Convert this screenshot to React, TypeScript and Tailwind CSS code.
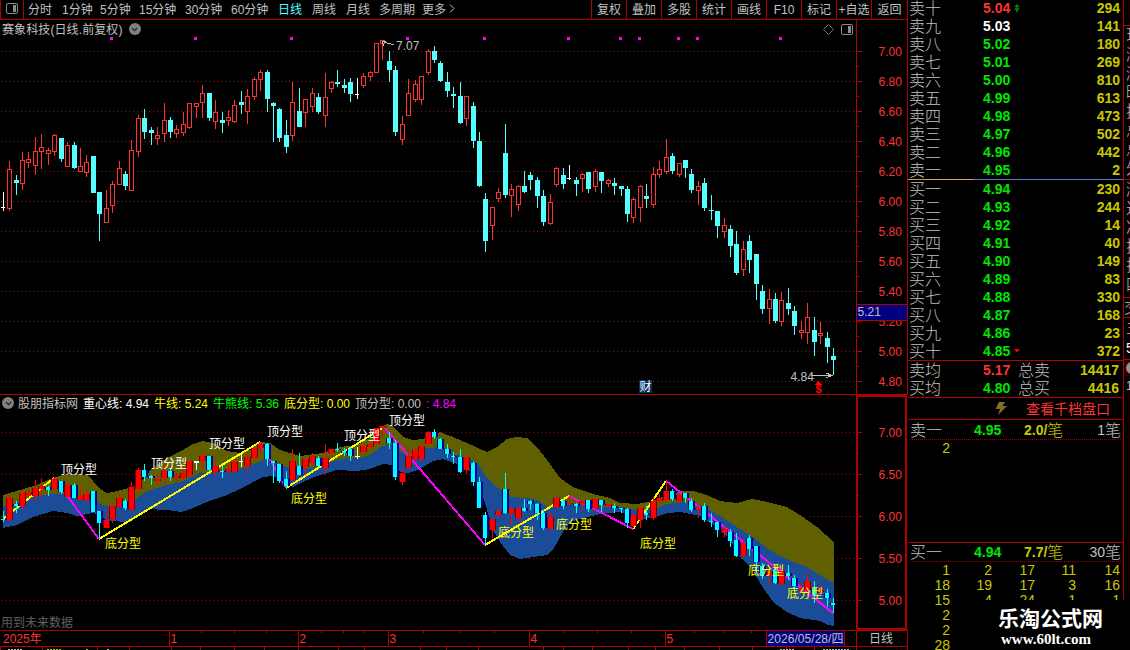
import { ChevronDown } from "lucide-react";

type Candle = [number, number, number, number, number, string];

// x, high, body top, body bottom, low, kind (r = up, c = down, w = flat)
const CANDLES: Candle[] = [
  [3, 192, 207, 208, 211, "w"], [9, 161, 169, 209, 211, "r"], [16, 175, 180, 183, 195, "c"],
  [22, 152, 160, 184, 190, "r"], [28, 152, 159, 163, 168, "r"], [35, 137, 151, 166, 175, "r"],
  [41, 134, 147, 152, 169, "r"], [48, 148, 150, 154, 165, "r"], [54, 134, 135, 152, 156, "r"],
  [61, 138, 138, 159, 162, "c"], [67, 142, 145, 167, 167, "r"], [74, 142, 145, 168, 169, "c"],
  [80, 148, 166, 172, 172, "r"], [86, 155, 162, 173, 177, "r"], [93, 156, 156, 193, 193, "c"],
  [99, 192, 192, 214, 241, "c"], [106, 190, 208, 223, 223, "r"], [112, 181, 184, 206, 213, "r"],
  [119, 161, 168, 185, 185, "r"], [125, 171, 174, 186, 190, "c"], [131, 140, 150, 191, 191, "r"],
  [138, 115, 118, 152, 157, "r"], [144, 109, 118, 132, 139, "c"], [151, 127, 130, 133, 145, "c"],
  [157, 127, 135, 139, 145, "r"], [164, 103, 120, 134, 142, "r"], [170, 117, 120, 132, 138, "c"],
  [176, 125, 129, 134, 138, "r"], [183, 112, 124, 133, 136, "r"], [189, 103, 103, 128, 129, "r"],
  [196, 103, 103, 107, 118, "r"], [202, 85, 93, 103, 118, "r"], [209, 93, 93, 118, 121, "c"],
  [215, 100, 112, 122, 129, "r"], [222, 112, 120, 123, 133, "c"], [228, 110, 117, 121, 126, "r"],
  [234, 100, 105, 122, 123, "r"], [241, 91, 102, 105, 114, "c"], [247, 89, 96, 112, 124, "r"],
  [254, 77, 79, 97, 100, "r"], [260, 70, 72, 80, 91, "r"], [267, 70, 72, 99, 112, "c"],
  [273, 102, 103, 106, 142, "c"], [279, 108, 109, 138, 142, "c"], [286, 120, 135, 147, 153, "c"],
  [292, 82, 102, 136, 141, "r"], [299, 88, 111, 127, 127, "c"], [305, 99, 99, 113, 127, "r"],
  [312, 88, 93, 107, 112, "r"], [318, 93, 97, 112, 114, "c"], [325, 73, 97, 116, 127, "r"],
  [331, 81, 82, 89, 93, "r"], [337, 70, 82, 84, 87, "c"], [344, 79, 85, 88, 93, "c"],
  [350, 78, 82, 94, 102, "c"], [357, 78, 94, 95, 99, "w"], [363, 73, 76, 86, 88, "r"],
  [370, 71, 72, 77, 81, "r"], [376, 43, 43, 73, 73, "r"], [382, 40, 40, 44, 60, "r"],
  [389, 51, 61, 70, 82, "c"], [395, 66, 70, 132, 136, "c"], [402, 116, 124, 140, 145, "r"],
  [408, 79, 93, 116, 116, "r"], [415, 80, 84, 100, 102, "r"], [421, 76, 76, 100, 105, "r"],
  [428, 49, 51, 73, 75, "r"], [434, 46, 51, 60, 63, "c"], [440, 61, 63, 81, 82, "c"],
  [447, 72, 82, 91, 97, "c"], [453, 87, 94, 96, 108, "c"], [460, 82, 96, 123, 124, "c"],
  [466, 96, 96, 119, 126, "r"], [473, 102, 106, 141, 148, "c"], [479, 132, 141, 186, 187, "c"],
  [485, 193, 199, 241, 252, "c"], [492, 207, 207, 226, 240, "r"], [498, 188, 192, 199, 202, "r"],
  [505, 124, 153, 195, 198, "c"], [511, 184, 189, 196, 217, "r"], [518, 185, 186, 205, 211, "r"],
  [524, 171, 186, 192, 193, "c"], [530, 172, 175, 180, 190, "c"], [537, 177, 180, 196, 208, "c"],
  [543, 190, 196, 222, 226, "c"], [550, 194, 202, 224, 225, "r"], [556, 167, 168, 185, 187, "r"],
  [563, 168, 175, 184, 189, "c"], [569, 165, 178, 179, 180, "w"], [576, 177, 180, 184, 196, "c"],
  [582, 173, 174, 179, 192, "r"], [588, 172, 172, 189, 193, "c"], [595, 169, 171, 187, 192, "r"],
  [601, 172, 172, 181, 193, "c"], [608, 179, 180, 184, 187, "r"], [614, 178, 183, 186, 195, "c"],
  [621, 186, 186, 189, 196, "c"], [627, 186, 189, 214, 222, "c"], [633, 197, 199, 218, 223, "r"],
  [640, 185, 186, 208, 222, "r"], [646, 184, 196, 199, 208, "c"], [653, 167, 174, 205, 208, "r"],
  [659, 161, 169, 175, 178, "r"], [666, 139, 157, 172, 174, "r"], [672, 153, 156, 171, 174, "c"],
  [679, 163, 163, 175, 177, "r"], [685, 160, 160, 168, 178, "c"], [691, 169, 174, 190, 193, "c"],
  [698, 181, 186, 191, 205, "r"], [704, 178, 183, 208, 211, "c"], [711, 195, 210, 211, 220, "c"],
  [717, 211, 211, 226, 238, "c"], [724, 218, 225, 232, 238, "r"], [730, 225, 229, 246, 257, "c"],
  [736, 231, 244, 273, 275, "c"], [743, 241, 249, 270, 276, "r"], [749, 235, 241, 260, 273, "c"],
  [756, 254, 254, 284, 300, "c"], [762, 285, 291, 309, 314, "c"], [769, 289, 299, 309, 324, "r"],
  [775, 293, 299, 321, 323, "c"], [781, 292, 300, 322, 326, "r"], [788, 288, 303, 309, 315, "c"],
  [794, 306, 311, 326, 335, "c"], [801, 321, 330, 333, 339, "r"], [807, 303, 317, 333, 344, "r"],
  [814, 317, 330, 342, 356, "c"], [820, 322, 333, 336, 344, "r"], [827, 332, 338, 347, 363, "c"],
  [833, 348, 356, 360, 375, "c"],
];

const BAND_TOP = "3,495 20,490 37,485 50,479 63,475 75,474 87,475 93,481 100,489 107,493 117,491 133,487 147,477 150,470 167,458 183,450 193,444 202,441 213,443 227,451 240,453 250,450 260,442 270,443 280,450 290,453 300,456 323,453 340,447 357,445 370,438 380,428 387,424 393,426 403,437 413,440 423,439 430,436 440,432 453,437 467,443 487,452 497,447 507,439 517,437 527,438 537,447 547,460 560,478 573,487 593,494 610,498 620,503 637,504 653,501 667,495 683,491 693,491 707,495 720,501 737,503 752,499 767,502 787,507 803,517 817,527 834,542";
const BAND_MID = "834,583 823,577 807,567 793,562 777,554 767,548 753,537 737,527 723,518 707,508 693,503 683,502 667,504 657,508 640,511 623,507 610,507 593,506 577,504 563,505 547,507 537,500 527,498 510,497 497,487 487,478 480,467 473,460 463,457 450,452 440,447 427,448 417,457 407,455 397,450 390,444 380,447 370,455 360,458 347,458 333,461 323,466 310,468 293,469 280,465 270,459 263,460 247,467 233,471 213,472 200,473 183,481 167,485 147,491 137,498 127,505 110,507 103,505 93,500 80,498 63,494 50,494 33,497 17,503 3,506";
const BAND_LOW = "3,528 17,525 33,517 53,511 67,513 77,516 93,513 100,515 107,521 130,522 137,515 147,509 167,510 182,512 193,508 207,502 227,495 240,489 263,477 273,476 283,480 293,487 303,482 317,476 337,470 357,471 370,469 383,464 393,465 400,472 408,473 420,469 433,461 443,459 460,465 472,473 480,487 487,510 493,530 500,542 510,555 520,559 533,557 547,555 553,550 563,532 570,522 580,519 600,514 620,512 640,519 653,518 667,513 680,512 700,516 717,527 730,540 740,557 753,570 760,583 773,602 787,612 800,618 820,621 828,625 834,626";

const reverse = (pts: string) => pts.split(" ").reverse().join(" ");

const PERIODS = [
  { label: "分时", w: "w-[34px]" },
  { label: "1分钟", w: "w-[38px]" },
  { label: "5分钟", w: "w-[39px]" },
  { label: "15分钟", w: "w-[46px]" },
  { label: "30分钟", w: "w-[46px]" },
  { label: "60分钟", w: "w-[47px]" },
  { label: "日线", w: "w-[34px]", active: true },
  { label: "周线", w: "w-[34px]" },
  { label: "月线", w: "w-[33px]" },
  { label: "多周期", w: "w-[43px]" },
  { label: "更多", w: "w-[27px]" },
];

const TOOLS = ["复权", "叠加", "多股", "统计", "画线", "F10", "标记", "+自选"];

const INDICATORS = [
  { text: "股朋指标网", cls: "w-[65px] text-[#c0c0c0]" },
  { text: "重心线: 4.94", cls: "w-[71px] text-white" },
  { text: "牛线: 5.24", cls: "w-[59px] text-[#ffff00]" },
  { text: "牛熊线: 5.36", cls: "w-[71px] text-[#00ff00]" },
  { text: "底分型: 0.00", cls: "w-[71px] text-[#ffff00]" },
  { text: "顶分型: 0.00", cls: "w-[71px] text-[#c0c0c0]" },
  { text: ": 4.84", cls: "text-[#ff00ff]" },
];

const SELLS = [
  ["卖十", "5.04", "294"], ["卖九", "5.03", "141"], ["卖八", "5.02", "180"], ["卖七", "5.01", "269"],
  ["卖六", "5.00", "810"], ["卖五", "4.99", "613"], ["卖四", "4.98", "473"], ["卖三", "4.97", "502"],
  ["卖二", "4.96", "442"], ["卖一", "4.95", "2"],
];

const BUYS = [
  ["买一", "4.94", "230"], ["买二", "4.93", "244"], ["买三", "4.92", "14"], ["买四", "4.91", "40"],
  ["买五", "4.90", "149"], ["买六", "4.89", "83"], ["买七", "4.88", "330"], ["买八", "4.87", "168"],
  ["买九", "4.86", "23"], ["买十", "4.85", "372"],
];

const ORDERS = [
  ["1", "2", "17", "11", "14"],
  ["18", "19", "17", "3", "16"],
  ["15", "4", "24", "1", "1"],
  ["2"],
  ["2"],
  ["28"],
];

const TOPS = [[61, 469], [151, 463], [209, 443], [267, 431], [344, 435], [389, 420]];
const BOTTOMS = [[105, 543], [291, 498], [498, 532], [556, 524], [640, 543], [748, 570], [787, 593]];
const EVENTS = [110, 194, 290, 406, 483, 567, 619, 638, 677, 696, 779];

function PanelIcon({ className }: { className?: string }) {
  return (
    <svg className={className} width="12" height="11" viewBox="0 0 12 11">
      <rect x="0.5" y="0.5" width="11" height="10" rx="1.5" fill="none" stroke="#8c8c8c" />
      <rect x="7" y="2" width="3" height="7" fill="#8c8c8c" />
    </svg>
  );
}

function RoundArrow() {
  return (
    <span className="flex h-3 w-3 items-center justify-center rounded-full bg-[#808080] text-[#181818]">
      <ChevronDown size={9} strokeWidth={3} />
    </span>
  );
}

function Toolbar() {
  return (
    <div className="flex h-5 border-b border-[#b00000] text-xs leading-5 text-[#c0c0c0]">
      <div className="flex w-6 items-start justify-center border-x border-[#b00000] pt-[3px]">
        <PanelIcon />
      </div>
      <div className="flex pl-1">
        {PERIODS.map((p) => (
          <span key={p.label} className={`${p.w} whitespace-nowrap ${p.active ? "text-[#54ffff]" : ""}`}>
            {p.label}
          </span>
        ))}
        <svg width="8" height="18" viewBox="0 0 8 18" fill="none" stroke="#c0c0c0">
          <path d="M1 4.500L5 8.500L1 12.500" />
        </svg>
      </div>
      <div className="ml-auto flex">
        {TOOLS.map((t) => (
          <span key={t} className="w-[35px] whitespace-nowrap border-l border-[#b00000] text-center">
            {t}
          </span>
        ))}
        <span className="w-[37px] border-x border-[#b00000] text-center">返回</span>
      </div>
    </div>
  );
}

function PriceCandle({ c }: { c: Candle }) {
  const [x, high, top, bottom, low, kind] = c;
  if (kind === "w") {
    return (
      <g fill="#fff">
        <rect x={x} y={high} width="1" height={low - high} />
        <rect x={x - 2} y={top} width="4" height="1" />
      </g>
    );
  }
  if (kind === "c") {
    return (
      <g fill="#54ffff">
        <rect x={x} y={high} width="1" height={low - high} />
        <rect x={x - 2} y={top} width="5" height={bottom - top} />
      </g>
    );
  }
  return (
    <g fill="#ff3232">
      <rect x={x} y={high} width="1" height={top - high} />
      <rect x={x} y={bottom} width="1" height={low - bottom} />
      <rect x={x - 1.5} y={top + 0.5} width="4" height={bottom - top - 1} fill="none" stroke="#ff3232" />
    </g>
  );
}

// the lower pane shares the price data on a flatter scale
const sub = (y: number) => Math.round(432 + (y - 51) * 0.56);

function SubCandle({ c }: { c: Candle }) {
  const [x, h, t, b, l, kind] = c;
  const high = sub(h);
  const top = sub(t);
  const bottom = Math.max(sub(b), top + 1);
  const low = sub(l);
  const white = x === 196 || x === 241 || x === 357;
  const down = kind === "c" || x === 3 || x === 48;
  const edge = down ? "#000096" : "#7a0000";
  const fill = white ? "#fff" : down ? "#00ffff" : "#ff0000";
  return (
    <g>
      {!white && <rect x={x - 3} y={top} width="7" height={bottom - top} fill={edge} />}
      <rect x={x} y={high} width="1" height={Math.max(low - high, 1)} fill={fill} />
      <rect x={x - 2} y={top} width={down ? 4 : 5} height={bottom - top} fill={fill} />
    </g>
  );
}

function MainChart() {
  const prices = Array.from({ length: 12 }, (_, i) => ({ y: 51 + i * 30, label: (7 - i * 0.2).toFixed(2) }));
  return (
    <section className="relative h-[375px] border-b border-[#b00000]">
      <svg className="block" width="908" height="374" viewBox="0 20 908 374" shapeRendering="crispEdges" fontSize="12">
        {prices.map(({ y, label }) => (
          <g key={y}>
            <path d={`M1 ${y + 0.5}H856`} stroke="#861a1a" strokeDasharray="1 3" />
            <path d={`M857 ${y + 0.5}H862`} stroke="#b00000" />
            {y < 380 && <path d={`M857 ${y + 15.5}H859`} stroke="#b00000" />}
            <text x="878.500" y={y + 5} fill="#ff3232">{label}</text>
          </g>
        ))}
        <path d="M856.500 20V394M907.500 20V394" stroke="#b00000" />
        {EVENTS.map((x) => (
          <rect key={x} x={x} y="37" width="3" height="3" fill="#ff00ff" />
        ))}
        {CANDLES.map((c) => (
          <PriceCandle key={c[0]} c={c} />
        ))}
        <path d="M394 45L382 41.500M382 41.500H386M382 41.500L384 46" stroke="#c0c0c0" fill="none" />
        <text x="396" y="50" fill="#c0c0c0">7.07</text>
        <path d="M811 375.500H831M826 373L832 375.500L826 378" stroke="#c0c0c0" fill="none" />
        <text x="790.500" y="381" fill="#c0c0c0">4.84</text>
        <path d="M818.500 381L822 385H815Z" fill="#ff0000" />
        <text x="815.500" y="393" fontSize="11" fontWeight="bold" fill="#ff0000">$</text>
        <rect x="639" y="380" width="13" height="13" fill="#003264" />
        <text x="639.500" y="391" fill="#fff">财</text>
        <rect x="857" y="304" width="50" height="17" fill="#000080" />
        <path d="M857 304.500H907M857 320.500H907" stroke="#b00000" />
        <text x="857.500" y="316" fill="#c0c0c0">5.21</text>
        <path d="M828.500 24.500L833.500 29.500L828.500 34.500L823.500 29.500Z" fill="none" stroke="#707070" shapeRendering="auto" />
      </svg>
      <div className="absolute left-0.5 top-0 flex items-center gap-1.5 text-xs leading-5 tracking-[0.1px] text-[#c0c0c0]">
        <span>赛象科技(日线.前复权)</span>
        <span className="-mt-0.5">
          <RoundArrow />
        </span>
      </div>
      <PanelIcon className="absolute left-[841px] top-1" />
    </section>
  );
}

function SubChart() {
  const prices = ["7.00", "6.50", "6.00", "5.50", "5.00"];
  return (
    <section className="relative h-[236px] border-b border-[#b00000]">
      <svg className="block" width="908" height="235" viewBox="0 395 908 235" shapeRendering="crispEdges" fontSize="12">
        {prices.map((label, i) => (
          <g key={label}>
            <path d={`M1 ${432.5 + i * 42}H856`} stroke="#b00000" strokeDasharray="1 3" />
            <path d={`M857 ${432.5 + i * 42}H862`} stroke="#b00000" />
            {i < 4 && <path d={`M857 ${453.5 + i * 42}H859`} stroke="#b00000" />}
            <text x="878.500" y={437 + i * 42} fill="#ff3232">{label}</text>
          </g>
        ))}
        <polygon points={`${BAND_TOP} ${BAND_MID}`} fill="#606000" />
        <polygon points={`${reverse(BAND_MID)} ${reverse(BAND_LOW)}`} fill="#1a4c98" />
        <g fill="none" strokeWidth="2">
          <path d="M3 519L54 478M99 539L260 442M286 488L384 427M485 545L569 496M633 529L666 481" stroke="#ffff00" />
          <path d="M54 478L99 539M260 442L286 488M384 427L485 545M569 496L633 529M666 481L833 613" stroke="#ff00ff" />
        </g>
        {CANDLES.map((c) => (
          <SubCandle key={c[0]} c={c} />
        ))}
        {TOPS.map(([x, y]) => (
          <text key={x} x={x} y={y + 5} fill="#fff">顶分型</text>
        ))}
        {BOTTOMS.map(([x, y]) => (
          <text key={x} x={x} y={y + 5} fill="#ffff00">底分型</text>
        ))}
        <text x="1" y="627" fill="#606060">用到未来数据</text>
        <path d="M856.500 395V629M906 395V629" stroke="#b00000" strokeWidth="2" />
        <path d="M857 395.500H907M857 629H907" stroke="#b00000" strokeWidth="2" />
      </svg>
      <div className="absolute left-0.5 top-0 flex items-start text-xs leading-[18px]">
        <span className="pt-0.5">
          <RoundArrow />
        </span>
        <div className="flex whitespace-nowrap pl-1">
          {INDICATORS.map((i) => (
            <span key={i.text} className={i.cls}>{i.text}</span>
          ))}
        </div>
      </div>
    </section>
  );
}

function TimeAxis() {
  const months = [[169, "1"], [298, "2"], [388, "3"], [529, "4"], [665, "5"]] as const;
  const ticks = [201, 234, 266, 321, 343, 364, 423, 459, 494, 563, 597, 631, 694, 723, 751];
  const lower = [0, 42, 97, 129, 171, 200, 234, 264, 298, 338, 364, 420, 446, 478, 543, 563, 592, 628, 655, 684, 719, 752, 786, 814];
  return (
    <svg className="block" width="908" height="19" viewBox="0 631 908 19" shapeRendering="crispEdges" fontSize="12">
      <text x="3" y="643" fill="#ff3232">2025年</text>
      {months.map(([x, m]) => (
        <g key={m}>
          <path d={`M${x + 0.5} 631V646`} stroke="#b00000" />
          <text x={x + 1.5} y="643" fill="#ff3232">{m}</text>
        </g>
      ))}
      {ticks.map((x) => (
        <rect key={x} x={x} y="631" width="1" height="2" fill="#b00000" />
      ))}
      {lower.map((x) => (
        <rect key={x} x={x} y="647" width="1" height="3" fill="#b00000" />
      ))}
      <rect x="766.500" y="630.500" width="78" height="16" fill="#000080" stroke="#b00000" />
      <text x="767.500" y="643" fill="#c0c0c0" textLength="76">2026/05/28/四</text>
      <text x="869" y="643" fill="#c0c0c0">日线</text>
      <path d="M0 646.500H907M856.500 631V650M907.500 631V650" stroke="#b00000" />
      <path d="M8 649.500H23M107 649.500H109M780 649.500H795M823 649.500H850" stroke="#c0c0c0" strokeDasharray="2 1" />
      <path d="M47 649.500H62M86 649.500H88" stroke="#c0c000" strokeDasharray="2 1" />
    </svg>
  );
}

function QuoteRow({ row }: { row: string[] }) {
  const [name, price, volume] = row;
  const color = price === "5.04" ? "text-[#ff3232]" : price === "5.03" ? "text-white" : "text-[#00e600]";
  return (
    <div className="flex h-[18px] items-center text-sm font-bold leading-[18px]">
      <span className="w-[74px] pt-0.5 text-base font-light leading-[18px] text-[#c0c0c0]">{name}</span>
      <span className={color}>{price}</span>
      {price === "5.04" && (
        <svg className="ml-1" width="6" height="8" viewBox="0 0 6 8" fill="#008000">
          <path d="M3 0L6 3H0ZM3 2.500L6 6H4V8H2V6H0Z" />
        </svg>
      )}
      {price === "4.85" && (
        <svg className="ml-1" width="6" height="4" viewBox="0 0 6 4" fill="#ff0000">
          <path d="M0 0H6L3 3.500Z" />
        </svg>
      )}
      <span className="ml-auto text-[#c8c800]">{volume}</span>
    </div>
  );
}

type QueueHeadProps = { name: string; price: string; avg: string; count: string; height: string };

function QueueHead({ name, price, avg, count, height }: QueueHeadProps) {
  return (
    <div className={`${height} mx-0.5 flex items-center border-b border-dotted border-[#a00000] text-sm font-bold leading-[18px]`}>
      <span className="w-16 pt-0.5 text-base font-light leading-[18px] text-[#c0c0c0]">{name}</span>
      <span className="w-[50px] text-[#00e600]">{price}</span>
      <span className="flex items-center text-[#c8c800]">
        {avg}/<span className="pt-0.5 text-base font-light leading-[18px]">笔</span>
      </span>
      <span className="ml-auto flex items-center font-medium text-[#c0c0c0]">
        {count}<span className="pt-0.5 text-base font-light leading-[18px]">笔</span>
      </span>
    </div>
  );
}

function OrderBook() {
  return (
    <aside className="h-[650px] w-[216px] overflow-hidden border-r border-[#b00000]">
      <div className="-mt-px pl-px pr-[3px]">
        {SELLS.map((r) => <QuoteRow key={r[0]} row={r} />)}
      </div>
      <div className="flex h-px">
        <div className="w-[65px] bg-[#e0a040]" />
        <div className="grow bg-[#4a80d0]" />
      </div>
      <div className="h-[181px] border-b border-[#b00000] pl-px pr-[3px]">
        {BUYS.map((r) => <QuoteRow key={r[0]} row={r} />)}
      </div>
      <div className="h-[37px] border-b border-[#b00000] pl-px pr-1">
        {[["卖均", "5.17", "总卖", "14417"], ["买均", "4.80", "总买", "4416"]].map(([a, p, b, v]) => (
          <div key={a} className="flex h-[18px] items-center text-sm font-bold leading-[18px]">
            <span className="w-[74px] pt-0.5 text-base font-light leading-[18px] text-[#c0c0c0]">{a}</span>
            <span className={a === "卖均" ? "w-[35px] text-[#ff3232]" : "w-[35px] text-[#00e600]"}>{p}</span>
            <span className="pt-0.5 text-base font-light leading-[18px] text-[#c0c0c0]">{b}</span>
            <span className="ml-auto text-[#c8c800]">{v}</span>
          </div>
        ))}
      </div>
      <div className="flex h-[22px] items-center border-b border-[#b00000] pl-[87px] text-sm leading-5 text-[#ff3232]">
        <svg width="12" height="13" viewBox="0 0 12 13" fill="#80702a">
          <path d="M4 0H10L7.500 4H12L3 13L5 7H0.500Z" />
        </svg>
        <span className="ml-[19px]">查看千档盘口</span>
      </div>
      <div className="h-[123px] border-b border-[#b00000]">
        <QueueHead name="卖一" price="4.95" avg="2.0" count="1" height="h-5" />
        <div className="w-[42px] text-right text-sm leading-4 text-[#c8c800]">2</div>
      </div>
      <div>
        <QueueHead name="买一" price="4.94" avg="7.7" count="30" height="h-[19px]" />
        {ORDERS.map((row, i) => (
          <div key={i} className="grid h-[15px] grid-cols-[42px_42px_43px_41px_44px] text-right text-sm leading-[17px] text-[#c8c800]">
            {row.map((v, j) => <span key={j}>{v}</span>)}
          </div>
        ))}
      </div>
    </aside>
  );
}

// right-hand info column, cut off by the window edge
function EdgeColumn() {
  const labels = ["现", "涨", "涨", "昨", "换", "总", "总", "外"];
  const more = ["涨", "达", "净", "换", "振", "四"];
  return (
    <div className="w-1.5 overflow-hidden whitespace-nowrap text-base font-light text-[#c0c0c0]">
      <div className="h-[26px] border-b border-[#b00000]" />
      <div className="h-[154px] border-b border-[#b00000] pl-0.5">
        {labels.map((l, i) => <div key={i} className="h-[19px] w-4 leading-[19px]">{l}</div>)}
      </div>
      <div className="h-[118px] border-b border-[#b00000] pl-0.5">
        {more.map((l, i) => <div key={i} className="h-[19px] w-4 leading-[19px]">{l}</div>)}
      </div>
      <div className="h-5 w-5 border-b border-[#b00000] leading-5">交</div>
      <div className="h-[42px] w-5 border-b border-[#b00000] pl-0.5 text-sm">
        <div className="leading-5">三</div>
        <div className="leading-5 text-white">5</div>
      </div>
      <div className="h-4 w-5 bg-[#300000] pl-0.5 pt-0.5">
        <div className="h-3 w-3 rounded-full bg-[#909090]" />
      </div>
      <div className="pl-0.5 text-xs leading-5">1</div>
    </div>
  );
}

export default function App() {
  return (
    <div className="relative flex h-[650px] w-[1130px] overflow-hidden bg-black font-['Liberation_Sans','Noto_Sans_CJK_SC',sans-serif]">
      <main className="flex w-[908px] flex-col">
        <Toolbar />
        <MainChart />
        <SubChart />
        <TimeAxis />
      </main>
      <OrderBook />
      <EdgeColumn />
      <div className="absolute bottom-0 right-0 flex h-[50px] w-[174px] flex-col bg-black pl-[42px] pt-2 font-bold text-white">
        <span className="text-[21px] leading-[21px]">乐淘公式网</span>
        <span className="pl-[3px] pt-px font-['Liberation_Serif',serif] text-[15px] leading-[18px]">www.60lt.com</span>
      </div>
    </div>
  );
}
